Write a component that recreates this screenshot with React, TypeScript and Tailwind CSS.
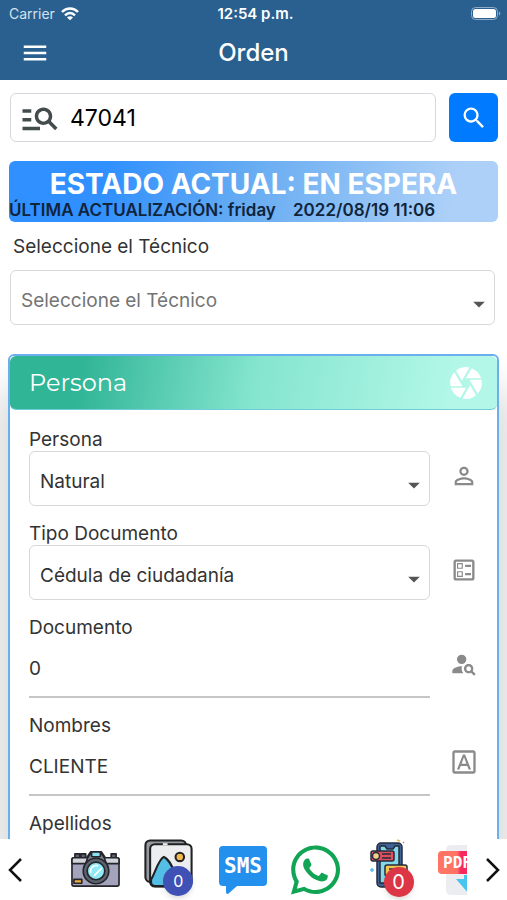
import { ReactNode } from "react";
import {
  MdManageSearch,
  MdMenu,
  MdSearch,
  MdCamera,
  MdPersonOutline,
  MdOutlineBallot,
  MdPersonSearch,
  MdOutlineFontDownload,
  MdArrowDropDown,
} from "react-icons/md";
import { FaWhatsapp } from "react-icons/fa";

function StatusBar() {
  return (
    <div className="grid h-7 grid-cols-3 items-center pr-1 pl-2 text-sm text-white">
      <span className="flex items-center gap-[6px] pl-px text-[#d5e2ec]">
        Carrier
        <svg className="h-4 w-[18px]" viewBox="0 0 18 16" fill="none" stroke="#fff" strokeWidth="2.5" aria-hidden="true">
          <path d="M1 6c4.500-4.700 11.500-4.700 16 0" />
          <path d="M4 9.300c3-3 7-3 10 0" />
          <path d="M9 14.300L6 11.500c1.800-1.600 4.200-1.600 6 0z" fill="#fff" stroke="none" />
        </svg>
      </span>
      <span className="text-center text-[15px] font-semibold whitespace-nowrap">12:54 p.m.</span>
      <svg className="h-4 w-8 justify-self-end" viewBox="0 0 32 16" aria-label="Batería">
        <rect x="0.500" y="1.500" width="26" height="12" rx="4" fill="none" stroke="#8fadc6" />
        <rect x="2" y="3" width="23" height="9" rx="2.500" fill="#fff" />
        <path d="M28 5.500v4c1.800-.6 1.800-3.400 0-4z" fill="#8fadc6" />
      </svg>
    </div>
  );
}

function PickList({ id, value, muted = false }: { id: string; value: string; muted?: boolean }) {
  return (
    <div className="relative">
      <select
        id={id}
        className={
          "block h-[55px] w-full appearance-none rounded-md border border-[#d5d9d9] bg-white px-[10px] pt-2 text-[19px] outline-none " +
          (muted ? "text-[#747474]" : "text-[#333]")
        }
      >
        <option>{value}</option>
      </select>
      <MdArrowDropDown className="pointer-events-none absolute top-5 right-0 h-7 w-8 text-[#555]" />
    </div>
  );
}

function Field({ id, label, icon, children }: { id: string; label: string; icon?: ReactNode; children: ReactNode }) {
  return (
    <div className="flex">
      <div className="min-w-0 flex-1">
        <label htmlFor={id} className="block h-6 text-[19px] leading-[26px]">
          {label}
        </label>
        {children}
      </div>
      <div className="flex w-[67px] justify-center pt-[35px] text-[#8a8a8a]">{icon}</div>
    </div>
  );
}

function LineInput({ id, value }: { id: string; value: string }) {
  return (
    <input
      id={id}
      defaultValue={value}
      className="mb-[15px] block h-[59px] w-full border-b-2 border-[#c6c6c6] bg-transparent pt-px text-[19px] outline-none"
    />
  );
}

function Chevron({ back = false }: { back?: boolean }) {
  return (
    <svg className="h-6 w-[14px]" viewBox="0 0 14 24" fill="none" stroke="#111" strokeWidth="2.5" aria-hidden="true">
      <path d={back ? "M13 1L2 12l11 11" : "M1 1l11 11L1 23"} />
    </svg>
  );
}

function CameraIcon() {
  return (
    <svg className="h-[49px] w-[49px]" viewBox="0 0 50 50" stroke="#25262b" strokeWidth="1.7" strokeLinejoin="round">
      <path d="M4 9h5v5H4zM10 9h5v5h-5zM41 9h5v5h-5z" fill="#5d636c" />
      <rect x="1" y="13" width="48" height="29" rx="2" fill="#a5a3bb" />
      <path d="M1 19v-4q0-2 2-2h13l4-6h11l4 6h12q2 0 2 2v4z" fill="#d3d3dc" />
      <path d="M15 19l2-6 4-6h9l4 6 2 6z" fill="#7d828c" />
      <rect x="21" y="7" width="9" height="5" rx="1" fill="#8ae2f0" />
      <circle cx="25.500" cy="26.500" r="13" fill="#5d636c" />
      <circle cx="25.500" cy="26.500" r="9" fill="#8feaf7" />
      <path d="M20 28a6 6 0 0 1 7-7M24 31l7-7" fill="none" stroke="#fff" strokeLinecap="round" />
      <rect x="3" y="35" width="8" height="4" fill="#f0b13e" />
    </svg>
  );
}

function GalleryIcon() {
  return (
    <svg className="h-[49px] w-[49px]" viewBox="0 0 52 52" stroke="#202124" strokeWidth="2.200" strokeLinejoin="round">
      <rect x="1.500" y="1.500" width="43" height="44" rx="5" fill="#96999d" />
      <rect x="6.500" y="5.500" width="44" height="45" rx="5" fill="#ededf0" />
      <path d="M20 5.500h5" stroke="#ededf0" />
      <path d="M7.500 43C12 36 15 22 21 19c7 2 11 17 19 31H12q-4.500 0-4.500-4z" fill="#54bfe4" />
      <circle cx="38" cy="19" r="4.500" fill="#f4b94d" />
    </svg>
  );
}

function SmsIcon() {
  return (
    <svg className="h-[50px] w-[49px]" viewBox="-1 0 49 50">
      <path d="M4 1h40q4 0 4 4v32q0 4-4 4H18l-9 8q-2 0-2-2v-6H4q-4 0-4-4V5q0-4 4-4z" fill="#2490ed" />
      <text x="24" y="28" textAnchor="middle" fill="#fff" fontFamily="DejaVu Sans Mono" fontWeight="700" fontSize="21">
        SMS
      </text>
    </svg>
  );
}

function PhoneIcon() {
  return (
    <svg className="h-[50px] w-[49px]" viewBox="0 0 49 50" stroke="#252b3d" strokeWidth="1.500" strokeLinejoin="round">
      <rect x="12" y="4" width="25" height="44" rx="4" fill="#3e6396" />
      <path d="M15 7h5l2 3h6l2-3h4v37H15z" fill="#84d8e8" />
      <rect x="6" y="12" width="23" height="10" rx="2" fill="#df4e5d" />
      <circle cx="11" cy="17" r="3.500" fill="#f7d08b" />
      <path d="M17 15h9m-9 4h9" />
      <rect x="20" y="26" width="22" height="11" rx="2" fill="#f0c751" />
      <path d="M24 30h13" />
      <path d="M32 1l3 1" stroke="#f2b84b" />
      <path d="M38 3l1 1" stroke="#e86b80" />
      <path d="M5 31h4m-2-2v4" stroke="#59bff3" />
    </svg>
  );
}

function PdfIcon() {
  return (
    <svg className="h-[50px] w-[29px]" viewBox="0 0 29 50">
      <defs>
        <linearGradient id="pdfRed">
          <stop offset="0.5" stopColor="#ff7464" />
          <stop offset="0.6" stopColor="#f8285f" />
        </linearGradient>
      </defs>
      <path d="M8 5q0-5 5-5h17v50H13q-5 0-5-5z" fill="#ecedf1" />
      <rect x="0" y="6" width="38" height="23" rx="4" fill="url(#pdfRed)" />
      <path d="M18 34h8v-4h4v18z" fill="#48c5ef" />
      <text x="5" y="23" fill="#fff" fontFamily="DejaVu Sans Mono" fontWeight="700" fontSize="16">
        PDF
      </text>
    </svg>
  );
}

export default function App() {
  return (
    <div className="flex h-screen flex-col overflow-hidden bg-white font-['Inter',sans-serif] text-[#333]">
      <header className="h-20 shrink-0 bg-[#29608f]">
        <StatusBar />
        <div className="grid h-[50px] grid-cols-3 items-center px-5 text-white">
          <button aria-label="Menú" className="w-[30px]">
            <MdMenu className="h-[30px] w-[30px]" />
          </button>
          <h1 className="text-center text-2xl font-medium">Orden</h1>
        </div>
      </header>

      <main className="min-h-0 flex-1 overflow-hidden pt-[13px]">
        <form className="flex gap-[13px] pr-[9px] pl-[10px]" onSubmit={(e) => e.preventDefault()}>
          <label className="flex h-[49px] min-w-0 flex-1 items-center gap-[9px] rounded-md border border-[#d5d8dc] px-2">
            <MdManageSearch className="h-[42px] w-[42px] shrink-0 text-[#444b4d]" />
            <input aria-label="Número de orden" defaultValue="47041" className="w-full min-w-0 pt-px text-[23px] text-black outline-none" />
          </label>
          <button aria-label="Buscar" className="flex h-[49px] w-[49px] items-center justify-center rounded-md bg-[#007bff] text-white">
            <MdSearch className="h-7 w-7" />
          </button>
        </form>

        <section className="mx-[9px] mt-[19px] h-[61px] rounded-md bg-[linear-gradient(100deg,#3090ff_20%,#69adf2_50%,#acd0f8_90%)] pt-[6px]">
          <h2 className="text-center text-[28px] leading-[35px] font-bold whitespace-nowrap text-white">ESTADO ACTUAL: EN ESPERA</h2>
          <p className="text-[17px] leading-4 font-semibold whitespace-pre text-[#10243c]">ÚLTIMA ACTUALIZACIÓN: friday    2022/08/19 11:06</p>
        </section>

        <div className="mt-3 mr-3 ml-[10px]">
          <label htmlFor="tecnico" className="mb-3 block h-6 pl-[3px] text-[19px] leading-[26px]">
            Seleccione el Técnico
          </label>
          <PickList id="tecnico" value="Seleccione el Técnico" muted />
        </div>

        <section className="mx-2 mt-[29px] rounded-md border-2 border-[#6bb0ee] bg-white shadow-[0_50px_40px_16px_rgba(0,0,0,0.14)]">
          <header className="flex h-[54px] items-center justify-between rounded-md border-b border-[#70ccd8] bg-[linear-gradient(100deg,#31b597_15%,#84e5ce_50%,#b2f7e7_90%)] pr-3 pl-[19px] text-white">
            <h2 className="font-['Montserrat','Inter',sans-serif] text-2xl">Persona</h2>
            <MdCamera className="h-[38px] w-[38px]" />
          </header>
          <div className="pt-[17px] pl-[19px]">
            <div className="space-y-[15px] pb-[15px]">
              <Field id="persona" label="Persona" icon={<MdPersonOutline className="h-7 w-7" />}>
                <PickList id="persona" value="Natural" />
              </Field>
              <Field id="tipo" label="Tipo Documento" icon={<MdOutlineBallot className="h-7 w-7" />}>
                <PickList id="tipo" value="Cédula de ciudadanía" />
              </Field>
            </div>
            <Field id="documento" label="Documento" icon={<MdPersonSearch className="h-7 w-7" />}>
              <LineInput id="documento" value="0" />
            </Field>
            <Field id="nombres" label="Nombres" icon={<MdOutlineFontDownload className="h-7 w-7" />}>
              <LineInput id="nombres" value="CLIENTE" />
            </Field>
            <Field id="apellidos" label="Apellidos">
              <LineInput id="apellidos" value="" />
            </Field>
          </div>
        </section>
      </main>

      <nav className="flex h-[61px] shrink-0 items-center bg-white">
        <button aria-label="Anterior" className="flex w-[30px] shrink-0 justify-center">
          <Chevron back />
        </button>
        <div className="flex h-full min-w-0 flex-1 items-center justify-between pl-[41px]">
          <button aria-label="Cámara">
            <CameraIcon />
          </button>
          <button aria-label="Galería" className="relative self-start">
            <GalleryIcon />
            <span className="absolute right-0 -bottom-2 flex h-[30px] w-[30px] items-center justify-center rounded-full bg-[#3f51b5] text-base text-white shadow-md">
              0
            </span>
          </button>
          <button aria-label="SMS">
            <SmsIcon />
          </button>
          <button aria-label="WhatsApp">
            <FaWhatsapp className="h-14 w-[49px] text-[#10a454]" />
          </button>
          <button aria-label="Mensajes" className="relative self-start">
            <PhoneIcon />
            <span className="absolute right-0 -bottom-2 flex h-[30px] w-[30px] items-center justify-center rounded-full bg-[#dc3545] text-xl text-white shadow-md">
              0
            </span>
          </button>
          <button aria-label="PDF">
            <PdfIcon />
          </button>
        </div>
        <button aria-label="Siguiente" className="flex w-10 shrink-0 justify-center pl-3">
          <Chevron />
        </button>
      </nav>
    </div>
  );
}
